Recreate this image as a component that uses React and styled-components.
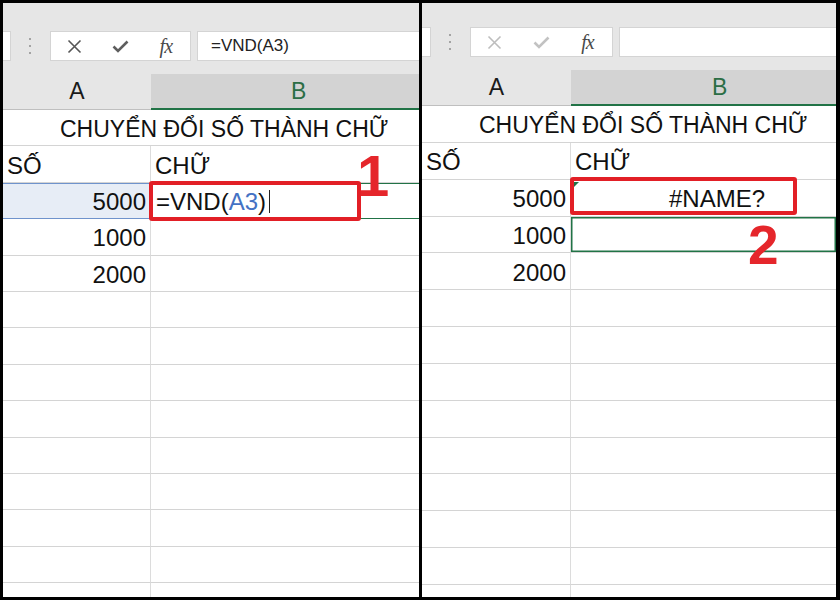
import React from 'react';
import styled, { createGlobalStyle } from 'styled-components';

// Two Excel screenshots side by side: formula typed (1) and the #NAME? result (2)

const GlobalStyle = createGlobalStyle`
  html, body {
    margin: 0;
    padding: 0;
    background: #000;
  }
  body {
    font-family: "Liberation Sans", Arial, sans-serif;
  }
`;

const Frame = styled.div`
  width: 840px;
  height: 600px;
  box-sizing: border-box;
  display: flex;
  gap: 3px;
  padding: 3px 4px 3px 3px;
  background: #000;
`;

const Panel = styled.div`
  position: relative;
  flex: none;
  width: ${p => p.$width}px;
  height: 100%;
  background: #fff;
  overflow: hidden;
  display: flex;
  flex-direction: column;
`;

const Ribbon = styled.div`
  flex: none;
  height: ${p => p.$height}px;
  box-sizing: border-box;
  padding-top: ${p => p.$top}px;
  background: #e6e6e6;
  display: flex;
  align-items: flex-start;
`;

const NameBox = styled.div`
  width: ${p => p.$width}px;
  height: 30px;
  box-sizing: border-box;
  background: #fff;
  border: 1px solid #d4d4d4;
  border-left: none;
`;

const Dots = styled.div`
  margin: 7px 0 0 18px;
  display: flex;
  flex-direction: column;
  gap: 5px;
`;

const Dot = styled.span`
  width: 2px;
  height: 2px;
  background: #a3a3a3;
`;

const IconBox = styled.div`
  margin-left: 19px;
  width: ${p => p.$width}px;
  height: 30px;
  box-sizing: border-box;
  background: #fff;
  border: 1px solid #d4d4d4;
  display: flex;
`;

const IconSlot = styled.div`
  width: 47px;
  display: flex;
  align-items: center;
  justify-content: center;
`;

const Fx = styled.span`
  font-family: "Liberation Serif", "Times New Roman", serif;
  font-style: italic;
  font-size: 20px;
  color: #4a4a4a;
  letter-spacing: -1px;
  margin-left: -2px;
`;

const FormulaInput = styled.div`
  margin-left: 6px;
  flex: 1;
  height: 30px;
  box-sizing: border-box;
  background: #fff;
  border: 1px solid #d4d4d4;
  border-right: none;
  padding-left: 13px;
  font-size: 17px;
  line-height: 28px;
  color: #222;
`;

const Header = styled.div`
  flex: none;
  height: 36px;
  display: flex;
  font-size: 23px;
`;

const HeaderA = styled.div`
  width: ${p => p.$width}px;
  box-sizing: border-box;
  background: #e6e6e6;
  border-bottom: 1px solid #bfbfbf;
  display: flex;
  align-items: center;
  justify-content: center;
  color: #1a1a1a;
`;

const HeaderB = styled.div`
  flex: 1;
  box-sizing: border-box;
  background: #d3d3d3;
  border-bottom: 2px solid #217346;
  display: flex;
  align-items: center;
  padding-left: ${p => p.$indent}px;
  color: #2b6e45;
`;

const Row = styled.div`
  flex: none;
  height: ${p => p.$height}px;
  display: flex;
`;

const Cell = styled.div`
  position: relative;
  box-sizing: border-box;
  ${p => (p.$width ? `width: ${p.$width}px; flex: none;` : 'flex: 1;')}
  border-bottom: 1px solid ${p => p.$bottom || '#d4d4d4'};
  border-right: ${p => (p.$divider ? '1px solid #dcdcdc' : 'none')};
  background: ${p => p.$fill || 'transparent'};
  box-shadow: ${p => p.$shadow || 'none'};
  display: flex;
  align-items: center;
  justify-content: ${p => (p.$right ? 'flex-end' : 'flex-start')};
  padding: 3px ${p => (p.$right ? 4 : 0)}px 0 ${p => p.$indent ?? 4}px;
  font-size: ${p => p.$size || 24}px;
  color: #111;
  white-space: nowrap;
`;

const RefText = styled.span`
  color: #4472c4;
`;

const Cursor = styled.span`
  display: inline-block;
  width: 1px;
  height: 23px;
  background: #222;
  margin-left: 3px;
`;

const ErrorFlag = styled.span`
  position: absolute;
  left: 2px;
  top: 2px;
  width: 0;
  height: 0;
  border-top: 6px solid #217346;
  border-right: 6px solid transparent;
`;

const Highlight = styled.div`
  position: absolute;
  left: ${p => p.$x}px;
  top: ${p => p.$y}px;
  width: ${p => p.$w}px;
  height: ${p => p.$h}px;
  box-sizing: border-box;
  border: 4px solid #e21f26;
  border-radius: 3px;
`;

const StepNumber = styled.div`
  position: absolute;
  left: ${p => p.$x}px;
  top: ${p => p.$y}px;
  font-size: ${p => p.$size}px;
  line-height: 1;
  font-weight: 700;
  color: #e5262b;
`;

const CloseIcon = ({ color }) => (
  <svg width="15" height="15" viewBox="0 0 15 15">
    <path d="M1.5 1.5 L13.5 13.5 M13.5 1.5 L1.5 13.5" stroke={color} strokeWidth="1.6" fill="none" />
  </svg>
);

const CheckIcon = ({ color }) => (
  <svg width="17" height="13" viewBox="0 0 17 13">
    <path d="M1.5 6.5 L6 11 L15.5 1.5" stroke={color} strokeWidth="2.6" fill="none" strokeLinejoin="miter" />
  </svg>
);

const FormulaBar = ({ nameWidth, boxWidth, formula, active }) => (
  <>
    <NameBox $width={nameWidth} />
    <Dots>
      <Dot />
      <Dot />
      <Dot />
    </Dots>
    <IconBox $width={boxWidth}>
      <IconSlot><CloseIcon color={active ? '#555' : '#bdbdbd'} /></IconSlot>
      <IconSlot><CheckIcon color={active ? '#5e5e5e' : '#c2c2c2'} /></IconSlot>
      <IconSlot><Fx>fx</Fx></IconSlot>
    </IconBox>
    <FormulaInput>{formula}</FormulaInput>
  </>
);

const Sheet = ({ config, renderRow3B, renderRow4B, children }) => {
  const { colA, rowH, bIndent, rows } = config;
  const empty = Array.from({ length: rows - 5 });
  return (
    <>
      <Header>
        <HeaderA $width={colA}>A</HeaderA>
        <HeaderB $indent={bIndent}>B</HeaderB>
      </Header>
      <Row $height={rowH}>
        <Cell $indent={57} $size={23}>CHUYỂN ĐỔI SỐ THÀNH CHỮ</Cell>
      </Row>
      <Row $height={rowH}>
        <Cell $width={colA} $divider>SỐ</Cell>
        <Cell $indent={4}>CHỮ</Cell>
      </Row>
      {renderRow3B}
      <Row $height={rowH}>
        <Cell $width={colA} $divider $right>1000</Cell>
        {renderRow4B}
      </Row>
      <Row $height={rowH}>
        <Cell $width={colA} $divider $right>2000</Cell>
        <Cell />
      </Row>
      {empty.map((_, i) => (
        <Row key={i} $height={rowH}>
          <Cell $width={colA} $divider />
          <Cell />
        </Row>
      ))}
      {children}
    </>
  );
};

const leftConfig = { colA: 148, rowH: 36.4, bIndent: 140, rows: 14 };
const rightConfig = { colA: 149, rowH: 36.85, bIndent: 141, rows: 14 };

const App = () => (
  <>
    <GlobalStyle />
    <Frame>
      <Panel $width={416}>
        <Ribbon $height={71} $top={28}>
          <FormulaBar nameWidth={8} boxWidth={141} formula="=VND(A3)" active />
        </Ribbon>
        <Sheet
          config={leftConfig}
          renderRow3B={
            <Row $height={leftConfig.rowH}>
              <Cell
                $width={leftConfig.colA}
                $divider
                $right
                $fill="#e7edf6"
                $bottom="#6f93cc"
                $shadow="inset 0 1px 0 #6f93cc"
              >
                5000
              </Cell>
              <Cell $indent={5} $bottom="#217346" $shadow="inset 0 1px 0 #217346">
                =VND(<RefText>A3</RefText>)<Cursor />
              </Cell>
            </Row>
          }
          renderRow4B={<Cell />}
        >
          <Highlight $x={146} $y={178} $w={212} $h={40} />
          <StepNumber $x={354} $y={144} $size={58}>1</StepNumber>
        </Sheet>
      </Panel>

      <Panel $width={414}>
        <Ribbon $height={67} $top={24}>
          <FormulaBar nameWidth={9} boxWidth={143} formula="" />
        </Ribbon>
        <Sheet
          config={rightConfig}
          renderRow3B={
            <Row $height={rightConfig.rowH}>
              <Cell $width={rightConfig.colA} $divider $right>5000</Cell>
              <Cell $indent={98}>
                <ErrorFlag />
                #NAME?
              </Cell>
            </Row>
          }
          renderRow4B={<Cell $shadow="inset 0 0 0 1.5px #217346" />}
        >
          <Highlight $x={148} $y={174} $w={227} $h={38} />
          <StepNumber $x={326} $y={215} $size={55}>2</StepNumber>
        </Sheet>
      </Panel>
    </Frame>
  </>
);

export default App;
